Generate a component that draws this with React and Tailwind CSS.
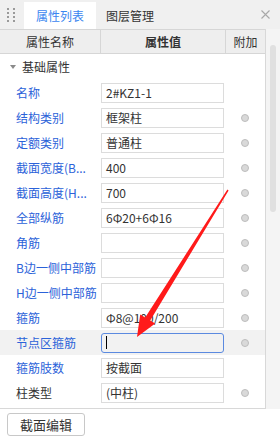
import React from 'react';

const rows = [
  { label: '名称', value: '2#KZ1-1', dot: false },
  { label: '结构类别', value: '框架柱', dot: true },
  { label: '定额类别', value: '普通柱', dot: true },
  { label: '截面宽度(B...', value: '400', dot: true },
  { label: '截面高度(H...', value: '700', dot: true },
  { label: '全部纵筋', value: '6Φ20+6Φ16', dot: true },
  { label: '角筋', value: '', dot: true },
  { label: 'B边一侧中部筋', value: '', dot: true },
  { label: 'H边一侧中部筋', value: '', dot: true },
  { label: '箍筋', value: 'Φ8@100/200', dot: true },
  { label: '节点区箍筋', value: '', dot: true, active: true },
  { label: '箍筋肢数', value: '按截面', dot: false },
  { label: '柱类型', value: '(中柱)', dot: true, plain: true },
  { label: '', value: '', dot: false },
];

const Row = ({ row }) => (
  <div className={`flex h-[25px] shrink-0 items-center ${row.active ? 'bg-[#f2f2f2]' : ''}`}>
    <div
      className={`w-[101px] shrink-0 whitespace-nowrap pl-4 ${row.plain ? 'text-[#333]' : 'text-[#2b62d9]'}`}
    >
      {row.label}
    </div>
    <div
      className={`flex h-[20px] w-[123px] shrink-0 items-center px-1 text-[#333] ${
        row.active ? 'rounded-[3px] border border-[#5b8ae0]' : 'border border-[#dcdcdc] bg-white'
      }`}
    >
      {row.active ? <span className="h-[13px] w-px bg-black" /> : row.value}
    </div>
    <div className="flex flex-1 justify-center">
      {row.dot && <span className="h-[8px] w-[8px] rounded-full border border-[#bdbdbd] bg-[#d9d9d9]" />}
    </div>
  </div>
);

export default function App() {
  return (
    <div className="relative flex h-[440px] w-[280px] flex-col overflow-hidden bg-white font-['Noto_Sans_CJK_SC','Noto_Sans',sans-serif] text-[12px]">
      {/* tabs */}
      <div className="flex h-[29px] shrink-0 items-end bg-[#f0f0f0]">
        <div className="grid h-full w-[24px] grid-cols-2 content-center justify-center gap-x-[2px] gap-y-[2px] px-[7px]">
          {[0, 1, 2, 3, 4, 5, 6, 7].map((i) => (
            <span key={i} className="h-[2px] w-[2px] bg-[#9a9a9a]" />
          ))}
        </div>
        <div className="flex h-[27px] items-center bg-white px-3 text-[#3b86f0]">属性列表</div>
        <div className="flex h-[27px] items-center px-[10px] text-[#333]">图层管理</div>
        <div className="ml-auto flex h-full items-center pr-[10px]">
          <svg width="9" height="9" viewBox="0 0 9 9" stroke="#a8a8a8" strokeWidth="1.1">
            <path d="M0.5 0.5L8.5 8.5M8.5 0.5L0.5 8.5" />
          </svg>
        </div>
      </div>

      {/* grid */}
      <div className="flex h-[380px] shrink-0">
        <div className="flex w-[266px] shrink-0 flex-col overflow-hidden border-r border-b border-[#d8d8d8]">
          <div className="flex h-[25px] shrink-0 border-y border-[#d6d6d6] bg-[#eeeeee] text-[#333]">
            <div className="flex w-[101px] items-center justify-center border-r border-[#d6d6d6]">属性名称</div>
            <div className="flex w-[125px] items-center justify-center border-r border-[#d6d6d6] font-semibold">属性值</div>
            <div className="flex flex-1 items-center justify-center">附加</div>
          </div>
          <div className="flex h-[26px] shrink-0 items-center gap-[6px] pl-[10px] text-[#333]">
            <svg width="6" height="4" viewBox="0 0 6 4">
              <path d="M0 0H6L3 4Z" fill="#8a8a8a" />
            </svg>
            基础属性
          </div>
          {rows.map((row, i) => (
            <Row key={i} row={row} />
          ))}
        </div>
        <div className="flex-1 bg-[#f4f4f4] pt-[16px] pl-[4px]">
          <div className="h-[167px] w-[6px] rounded-full bg-[#e0e0e0]" />
        </div>
      </div>

      {/* footer */}
      <div className="flex flex-1 items-start pt-[4px] pl-[7px]">
        <button className="h-[23px] w-[78px] rounded-[3px] border border-[#c8c8c8] bg-white text-[13px] text-[#333]">
          截面编辑
        </button>
      </div>

      {/* annotation arrow */}
      <svg className="pointer-events-none absolute left-0 top-0" width="280" height="440">
        <polygon
          points="228.6,190.4 150.2,320.6 155.2,323.6 137,337 140.2,314.4 145.2,317.4 227.4,189.6"
          fill="#ff1a1a"
        />
      </svg>
    </div>
  );
}
